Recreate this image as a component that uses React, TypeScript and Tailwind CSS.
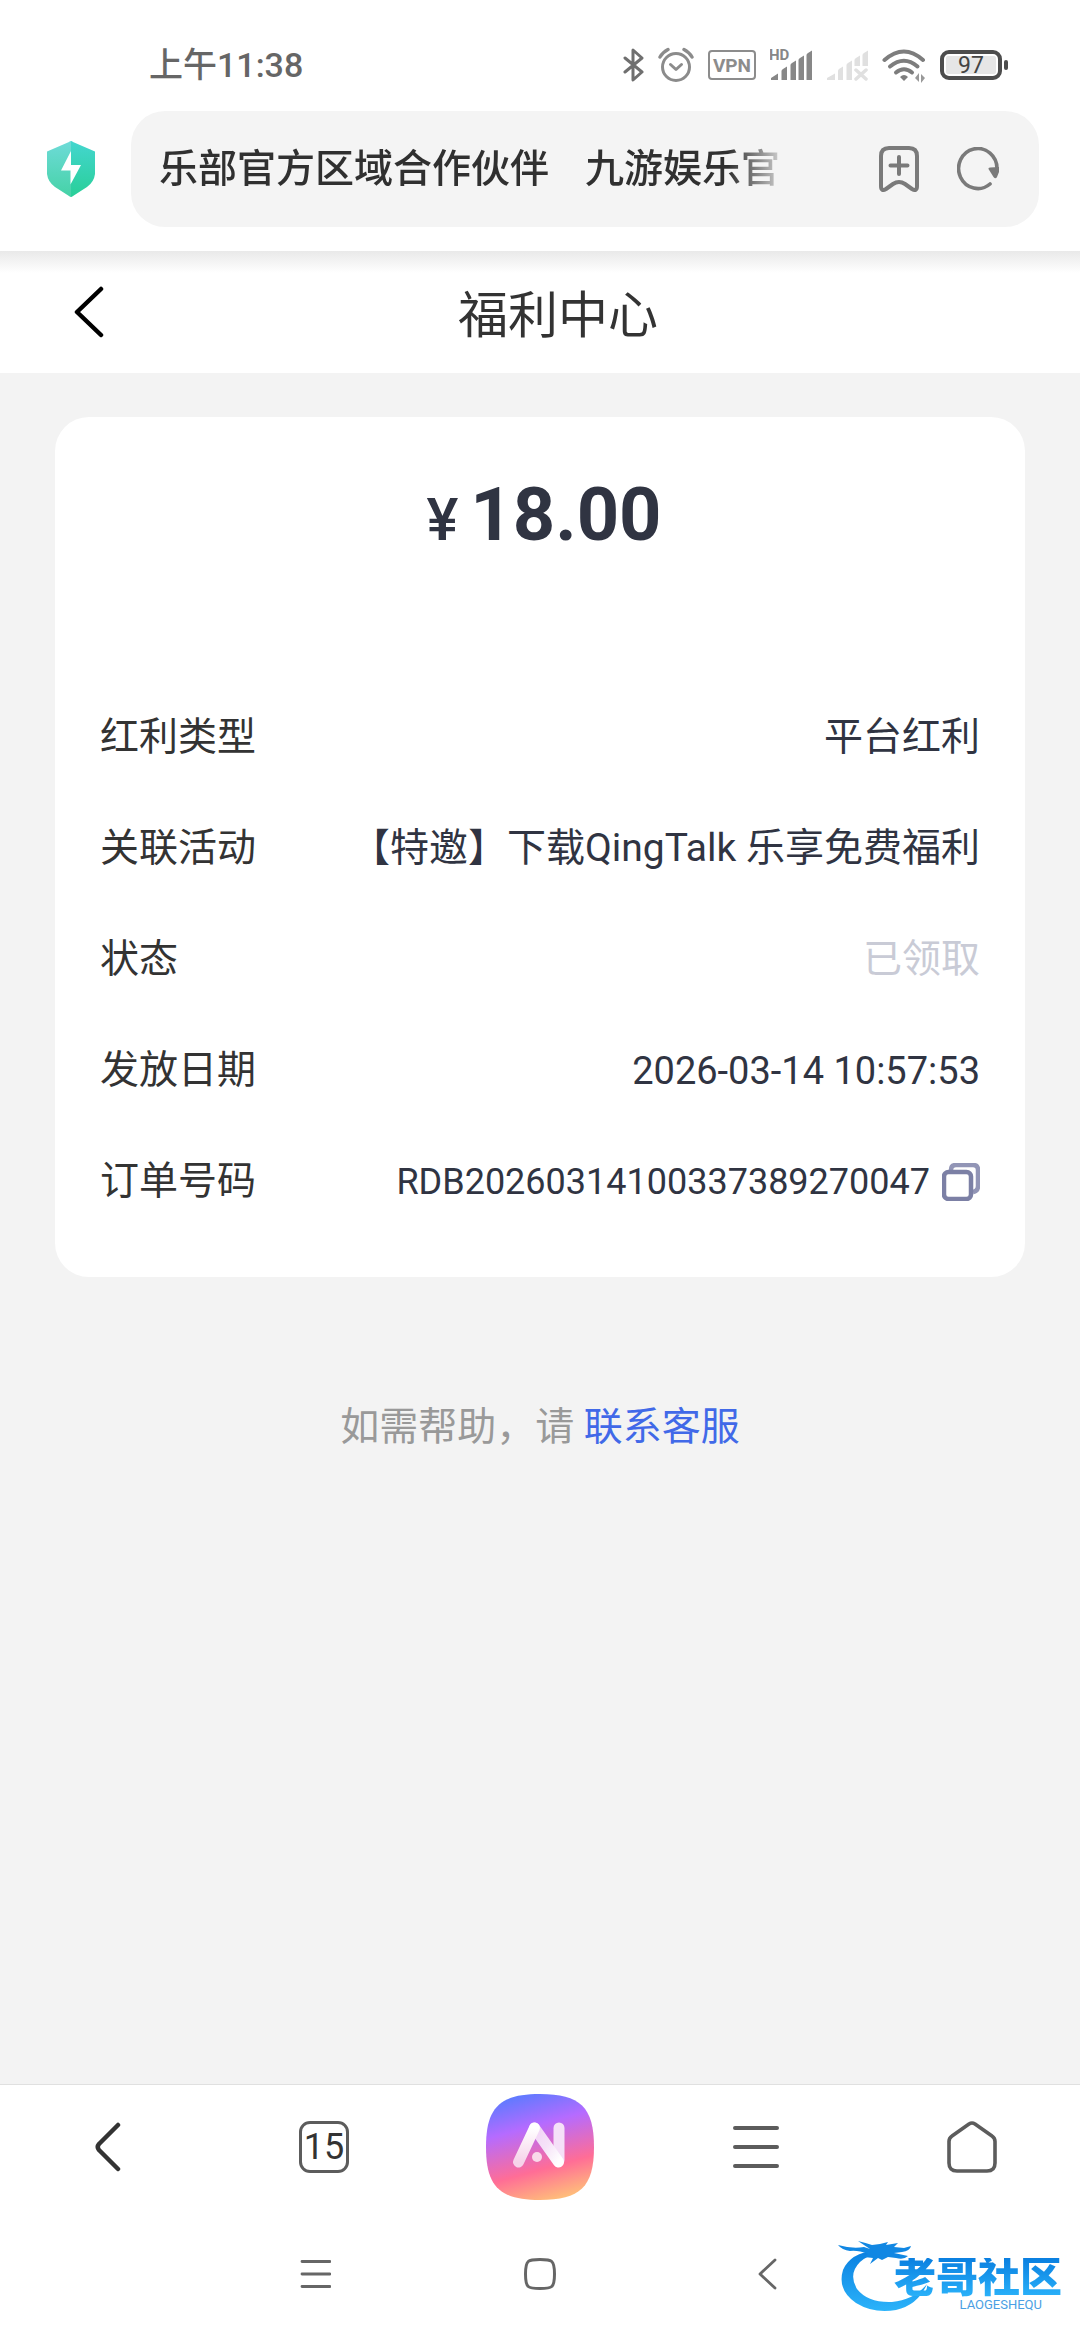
import React from "react";

const cjk = "font-['Roboto','Noto_Sans_CJK_SC',sans-serif]";

function StatusIcons() {
  return (
    <div className="flex items-center gap-3.5" aria-hidden="true">
      <svg className="h-9 w-[22px]" viewBox="0 0 22 36" fill="none" stroke="#6f6f6f" strokeWidth="3" strokeLinejoin="round" strokeLinecap="round">
        <path d="M3 11 L20 25 L11 33 V3 L20 11 L3 25" />
      </svg>
      <svg className="h-9 w-9" viewBox="0 0 36 36" fill="none" stroke="#8b8b8b" strokeWidth="3" strokeLinecap="round" strokeLinejoin="round">
        <circle cx="18" cy="20" r="13.5" />
        <path d="M12.5 17.5 L18 22.5 L23.5 17.5" />
        <path d="M2 10 Q5 5 10 2.5 M34 10 Q31 5 26 2.5" strokeWidth="3.4" />
      </svg>
      <span className="flex h-[30px] w-12 items-center justify-center rounded-sm border-2 border-[#8c8c8c] text-[19px] leading-none font-bold text-[#8c8c8c]">VPN</span>
      <svg className="h-9 w-[42px]" viewBox="0 0 42 36" fill="#878787">
        <path d="M1 33 V31 L8 26.500 V33Z M11.500 33 V24 Q11.500 23 13 22 L17 19.500 V33Z M20.500 33 V18 Q20.500 17 22 16 L26 13.500 V33Z M28.500 33 V13 Q28.500 12 30 11 L34 8.500 V33Z M36.500 33 V8 Q36.500 7 38 6 L42 3.500 V33Z" />
        <text x="-1" y="13" fontSize="15" fontWeight="bold" fontFamily="Roboto, sans-serif">HD</text>
      </svg>
      <svg className="h-9 w-[42px]" viewBox="0 0 42 36" fill="#e0e0e0">
        <path d="M1 33 V31 L9 26.500 V33Z M12 33 V24 Q12 23 13 22 L17 19.500 V33Z M20.500 33 V18 Q20.500 17 22 16 L26 13.500 V33Z M28.500 19 V13 Q28.500 12 30 11 L34 8.500 V19Z M36.500 19 V8 Q36.500 7 38 6 L42 3.500 V19Z" />
        <path d="M30 23 L40 32 M40 23 L30 32" stroke="#e0e0e0" strokeWidth="3.5" strokeLinecap="round" />
      </svg>
      <svg className="h-9 w-11" viewBox="0 0 44 36" fill="none" stroke="#7d7d7d" strokeWidth="4" strokeLinecap="round">
        <path d="M2.500 13 Q22 -4 41 13" />
        <path d="M8 19.500 Q22 8 35.500 19.500" />
        <path d="M14 25.500 Q22 19 30 25.500" />
        <path d="M18 30 Q22 26 26 30 L22 34Z" fill="#7d7d7d" stroke="none" />
        <path d="M37 26 V35 L33 31Z M39 36 V27 L43 31Z" fill="#999" stroke="none" />
      </svg>
      <div className="flex items-center gap-0.5">
        <span className="flex h-[30px] w-[62px] rounded-[9px] border-4 border-[#4d4d4d] p-0.5">
          <span className="flex flex-1 items-center justify-center rounded-xs bg-[#e6e6e6] text-[23px] leading-none text-[#444]">97</span>
        </span>
        <span className="h-2.5 w-1 rounded-sm bg-[#4d4d4d]" />
      </div>
    </div>
  );
}

function Shield() {
  return (
    <svg className="h-14 w-12" viewBox="0 0 48 56" aria-hidden="true">
      <defs>
        <linearGradient id="shieldLeft" x1="0" y1="0" x2="0" y2="1">
          <stop offset="0" stopColor="#6edbd8" />
          <stop offset="1" stopColor="#45d2a6" />
        </linearGradient>
        <linearGradient id="shieldRight" x1="0" y1="0" x2="0" y2="1">
          <stop offset="0" stopColor="#44d6cf" />
          <stop offset="1" stopColor="#29cf98" />
        </linearGradient>
      </defs>
      <path d="M24 0 Q23 0 22 1 L0 10.500 V33 Q1 41 8 46 L22 55 Q23 56 24 56Z" fill="url(#shieldLeft)" />
      <path d="M24 0 Q25 0 26 1 L48 10.500 V33 Q47 41 40 46 L26 55 Q25 56 24 56Z" fill="url(#shieldRight)" />
      <path d="M24 10 L14 29.500 H23.500 V43.500 L34 24 H24Z" fill="#fff" />
    </svg>
  );
}

function AiLogo() {
  return (
    <svg className="h-[106px] w-[108px]" viewBox="0 0 108 106" aria-hidden="true">
      <defs>
        <linearGradient id="aiBg" x1="0.36" y1="0" x2="0.64" y2="1">
          <stop offset="0" stopColor="#607aff" />
          <stop offset="0.3" stopColor="#b56bff" />
          <stop offset="0.7" stopColor="#ff6d96" />
          <stop offset="1" stopColor="#ffbe7a" />
        </linearGradient>
        <linearGradient id="aiLeft" x1="0" y1="0" x2="0" y2="1">
          <stop offset="0" stopColor="#fff" />
          <stop offset="1" stopColor="#f6d3ea" />
        </linearGradient>
        <linearGradient id="aiDiag" x1="0" y1="0" x2="1" y2="1">
          <stop offset="0" stopColor="#f1d3f6" />
          <stop offset="0.5" stopColor="#f5e2f8" />
          <stop offset="1" stopColor="#fff" />
        </linearGradient>
      </defs>
      <path d="M54 0 C94 0 108 13 108 53 C108 93 94 106 54 106 C14 106 0 93 0 53 C0 13 14 0 54 0Z" fill="url(#aiBg)" />
      <g fill="none" strokeWidth="11" strokeLinecap="round" strokeLinejoin="round">
        <path d="M73 34 V66" stroke="#f5e0f8" />
        <path d="M48.500 34 L72.500 68" stroke="url(#aiDiag)" />
        <path d="M48.500 34 L32.500 68" stroke="url(#aiLeft)" />
      </g>
      <circle cx="51" cy="63" r="5" fill="#f9d9ea" />
    </svg>
  );
}

function Row({ label, children }: { label: string; children: React.ReactNode }) {
  return (
    <div className="flex h-[111px] items-center justify-between">
      <dt className="text-[#333]">{label}</dt>
      <dd className="flex items-center gap-3 text-[#303442]">{children}</dd>
    </div>
  );
}

function Watermark() {
  return (
    <div className="pointer-events-none absolute right-[18px] bottom-7 h-[76px] w-[224px]">
      <svg className="absolute inset-0 h-full w-full" viewBox="0 0 224 76" aria-hidden="true">
        <defs>
          <linearGradient id="dragon" x1="0" y1="0" x2="0" y2="1">
            <stop offset="0" stopColor="#0a7fe0" />
            <stop offset="1" stopColor="#2bb3fa" />
          </linearGradient>
        </defs>
        <path
          d="M38 14 Q12 17 5 34 Q-1 54 18 67 Q36 78 58 74 Q80 69 89 48 Q76 64 54 66 Q30 67 19 53 Q10 38 22 26 Q28 20 38 19Z"
          fill="url(#dragon)"
        />
        <path
          d="M0 9 Q14 13 26 11 L32 13 Q26 9 20 5 Q28 7 34 9 L42 8 L50 6 L48 9 L60 7 L56 11 L66 12 L73 10 Q72 15 64 16 L56 17 L70 20 Q66 24 58 22 L50 21 L44 24 L40 22 L32 28 L35 22 L26 21 L30 18 Q20 14 12 15 Q4 14 0 9Z"
          fill="#1187e3"
        />
      </svg>
      <div className="relative flex h-full flex-col items-end justify-end">
        <span className="bg-linear-to-b from-[#0a7fe0] to-[#2bb3fa] bg-clip-text text-[42px] leading-10 font-black text-transparent">老哥社区</span>
        <span className="mr-5 text-[13px] leading-[14px] text-[#4a9fe4]">LAOGESHEQU</span>
      </div>
    </div>
  );
}

export default function App() {
  return (
    <div className={`${cjk} relative flex min-h-screen flex-col bg-[#f3f3f3] text-[39px] leading-none`}>
      <header className="bg-white">
        <div className="flex h-[111px] items-center justify-between pt-[19px] pr-[72px] pl-[149px]">
          <span className="text-[34px] font-medium text-[#666]">上午11:38</span>
          <StatusIcons />
        </div>
        <div className="flex items-center pr-[41px] pb-6">
          <button type="button" aria-label="安全" className="flex w-[131px] justify-start pl-[47px]">
            <Shield />
          </button>
          <div className="flex h-[116px] min-w-0 flex-1 items-center justify-between rounded-[34px] bg-[#f4f4f4] pr-10 pl-7">
            <div className="w-[632px] overflow-hidden bg-linear-to-r from-[#303030] from-90% to-[#f4f4f4] bg-clip-text leading-[56px] font-medium whitespace-pre text-transparent">
              乐部官方区域合作伙伴<span className="ml-9">九游娱乐官</span>
            </div>
            <div className="flex items-center gap-[38px]">
              <button type="button" aria-label="添加书签">
                <svg className="h-[46px] w-10" viewBox="0 0 40 46" fill="none" stroke="#7a7a7a" strokeWidth="4" strokeLinecap="round" strokeLinejoin="round">
                  <path d="M10 2 H30 Q38 2 38 10 V40 Q38 46 33 43 L26 38 Q20 34 14 38 L7 43 Q2 46 2 40 V10 Q2 2 10 2Z" />
                  <path d="M20 11 V28 M11.500 19.500 H28.500" />
                </svg>
              </button>
              <button type="button" aria-label="刷新">
                <svg className="h-11 w-[42px]" viewBox="0 0 42 44">
                  <path d="M33 37 A19.200 20 0 1 1 40 22" fill="none" stroke="#7a7a7a" strokeWidth="3.600" strokeLinecap="round" />
                  <path d="M31.500 22 Q31 20.500 33 20.500 L42 20 V25 L40 30 Q38.500 32.500 36.500 30Z" fill="#7a7a7a" />
                </svg>
              </button>
            </div>
          </div>
        </div>
      </header>

      <div className="flex h-[122px] items-center bg-linear-to-b from-[#e9e9e9] to-white to-18% pr-[68px] pl-[73px]">
        <button type="button" aria-label="返回">
          <svg className="h-[52px] w-[31px]" viewBox="0 0 31 52" fill="none" stroke="#000" strokeWidth="4.500" strokeLinecap="round" strokeLinejoin="round">
            <path d="M28 3 L4 26 L28 49" />
          </svg>
        </button>
        <h1 className="flex-1 pt-2 text-center text-[50px] text-[#333]">福利中心</h1>
      </div>

      <main className="flex-1 px-[55px] pt-11">
        <section className="rounded-[34px] bg-white px-[45px] pt-[60px] pb-10">
          <p className="flex items-baseline justify-center gap-3 pl-2 text-[#303442]">
            <span className="text-[60px] leading-[76px] font-medium">¥</span>
            <span className="text-[74px] leading-[76px] font-bold">18.00</span>
          </p>
          <dl className="pt-[124px]">
            <Row label="红利类型">平台红利</Row>
            <Row label="关联活动">【特邀】下载QingTalk 乐享免费福利</Row>
            <Row label="状态">
              <span className="text-[#c9cbd6]">已领取</span>
            </Row>
            <Row label="发放日期">
              <span className="text-[38px]">2026-03-14 10:57:53</span>
            </Row>
            <Row label="订单号码">
              <span className="text-[36px]">RDB20260314100337389270047</span>
              <button type="button" aria-label="复制">
                <svg className="h-[38px] w-[38px]" viewBox="0 0 38 38" fill="none" strokeWidth="4">
                  <path d="M9 7 Q9 2 14 2 H31 Q36 2 36 7 V23 Q36 28 31 29" stroke="#9295b6" strokeWidth="4.500" />
                  <rect x="2" y="9" width="27" height="27" rx="4.500" fill="#fff" stroke="#7c80a5" strokeWidth="4.500" />
                </svg>
              </button>
            </Row>
          </dl>
        </section>
        <p className="pt-[131px] text-center text-[#999]">
          如需帮助，请 <a href="#support" className="text-[#4169e8]">联系客服</a>
        </p>
      </main>

      <nav aria-label="浏览器" className="grid h-[124px] grid-cols-5 place-items-center border-t border-[#e0e0e0] bg-white text-[#5c5c5c]">
        <button type="button" aria-label="后退">
          <svg className="h-[50px] w-[26px]" viewBox="0 0 26 50" fill="none" stroke="#333" strokeWidth="4.500" strokeLinecap="round" strokeLinejoin="round">
            <path d="M23 3 L4 22 Q1.500 25 4 28 L23 47" />
          </svg>
        </button>
        <button type="button" aria-label="标签页" className="flex h-[52px] w-[50px] items-center justify-center rounded-[11px] border-[3px] border-[#5c5c5c] text-[36px] leading-none text-[#333]">
          15
        </button>
        <button type="button" aria-label="AI">
          <AiLogo />
        </button>
        <button type="button" aria-label="菜单">
          <svg className="h-11 w-[46px]" viewBox="0 0 46 44" stroke="currentColor" strokeWidth="4" strokeLinecap="round">
            <path d="M2 3 H44 M2 22 H44 M2 41 H44" />
          </svg>
        </button>
        <button type="button" aria-label="主页">
          <svg className="h-[52px] w-[50px]" viewBox="0 0 50 52" fill="none" stroke="currentColor" strokeWidth="3.600" strokeLinejoin="round">
            <path d="M22 3 Q25 1 28 3 L45 15 Q48 17 48 20.500 V42 Q48 50 40 50 H10 Q2 50 2 42 V20.500 Q2 17 5 15Z" />
          </svg>
        </button>
      </nav>

      <nav aria-label="系统" className="flex h-[132px] items-center justify-center gap-[193px] bg-white text-[#666]">
        <button type="button" aria-label="最近任务">
          <svg className="h-8 w-8" viewBox="0 0 32 32" stroke="currentColor" strokeWidth="2.800" strokeLinecap="round">
            <path d="M3 3.500 H31 M3 16 H31 M3 28.500 H31" />
          </svg>
        </button>
        <button type="button" aria-label="桌面">
          <svg className="h-8 w-8" viewBox="0 0 32 32" fill="none" stroke="currentColor" strokeWidth="3">
            <path d="M16 1.500 C28 1.500 30.500 2 30.500 16 C30.500 30 28 30.500 16 30.500 C4 30.500 1.500 30 1.500 16 C1.500 2 4 1.500 16 1.500Z" />
          </svg>
        </button>
        <button type="button" aria-label="返回上一级">
          <svg className="h-8 w-8" viewBox="0 0 32 32" fill="none" stroke="currentColor" strokeWidth="2.800" strokeLinecap="round" strokeLinejoin="round">
            <path d="M26 2 L11 16 L26 30" />
          </svg>
        </button>
      </nav>
      <Watermark />
    </div>
  );
}
